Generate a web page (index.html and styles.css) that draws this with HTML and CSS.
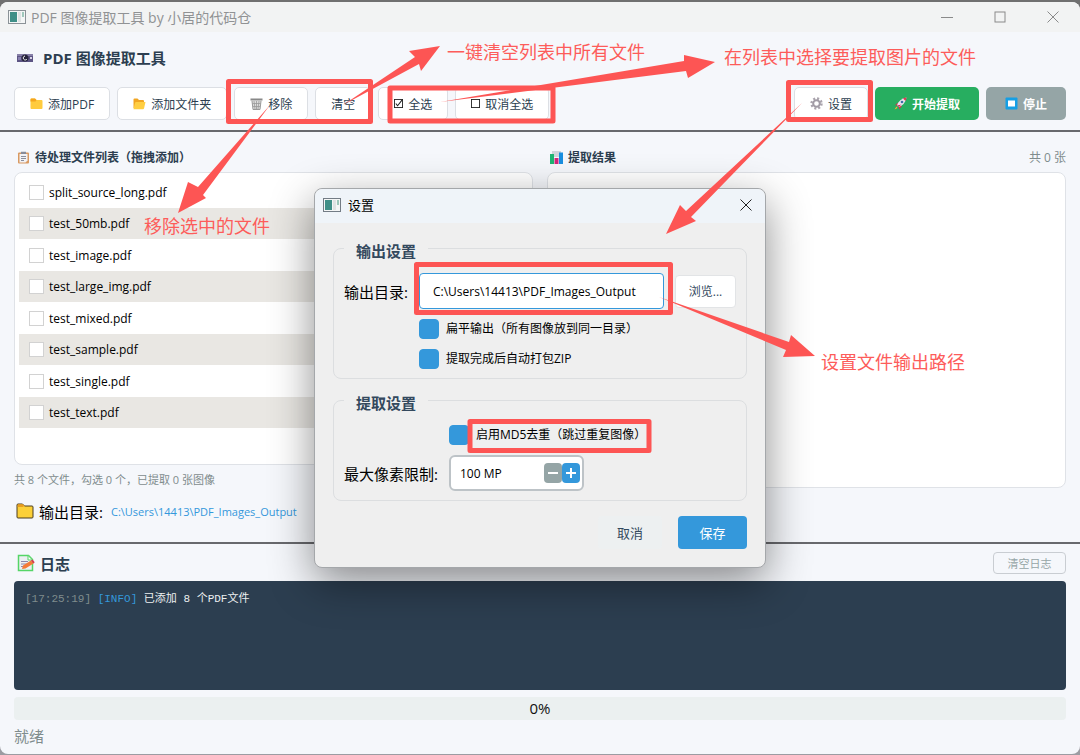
FILE: index.html
```html
<!DOCTYPE html>
<html lang="zh-CN">
<head>
    <meta charset="UTF-8">
    <meta name="viewport" content="width=device-width, initial-scale=1.0">
    <title>PDF 图像提取工具</title>
    <link rel="stylesheet" href="styles.css">
</head>
<body>
    <div class="window">
        <header class="titlebar">
            <svg class="app-icon" viewBox="0 0 18 14"><rect x=".5" y=".5" width="17" height="13" fill="#f4f6f6" stroke="#8b9297"/><rect x="2" y="2" width="7" height="10" fill="#3f8f87"/><rect x="10" y="2" width="3" height="10" fill="#dfe3e3"/><path d="M15 2v5" stroke="#4a9a80"/></svg>
            <span class="titlebar-text">PDF 图像提取工具 by 小居的代码仓</span>
            <div class="window-controls">
                <button type="button" aria-label="最小化"><svg viewBox="0 0 12 12"><path d="M0 6.500h12"/></svg></button>
                <button type="button" aria-label="最大化"><svg viewBox="0 0 12 12"><rect x="1" y="1" width="10" height="10"/></svg></button>
                <button type="button" aria-label="关闭"><svg viewBox="0 0 12 12"><path d="M.5 .5l11 11M11.500 .5l-11 11"/></svg></button>
            </div>
        </header>

        <div class="heading">
            <svg class="heading-icon" viewBox="0 0 16 16"><rect x="0" y="5" width="16" height="8" fill="#5d5584"/><rect x="0" y="5" width="16" height="2" fill="#8780a8"/><rect x="1" y="8" width="3" height="3" fill="#877fae"/><circle cx="8" cy="9" r="3.500" fill="#25233a"/><path d="M8 7a2 2 0 1 0 2 3" fill="none" stroke="#fff"/><rect x="13" y="8" width="2" height="2" fill="#d7d3e6"/></svg>
            <h1>PDF 图像提取工具</h1>
        </div>

        <div class="toolbar">
            <button type="button" class="btn"><svg class="icon" viewBox="0 0 13 13"><path d="M.5 2.500q0-1 1-1h3.500l1.500 1.500h5q1 0 1 1v7q0 1-1 1h-10q-1 0-1-1z" fill="#ffcb3d"/><path d="M.5 2.500q0-1 1-1h3.500l1.500 1.500-1 1.500h-5z" fill="#f4a51e"/></svg>添加PDF</button>
            <button type="button" class="btn"><svg class="icon" viewBox="0 0 13 13"><path d="M.5 2.500q0-1 1-1h3l1.500 1.500h4q1 0 1 1v7h-10.500z" fill="#f1a522"/><path d="M.5 12l1.500-6q.3-1 1-1h9.500l-1.500 6.500q-.2.8-1 .8h-9.500z" fill="#ffce42"/></svg>添加文件夹</button>
            <button type="button" class="btn"><svg class="icon" viewBox="0 0 13 13"><path d="M.5 1.500h12v2h-12z" fill="#888"/><path d="M2 4l1 8.500h7l1-8.500" fill="#ddd" stroke="#999"/><path d="M4 4l1 8M6.500 4v8M9 4l-1 8M2.500 6.500h8M3 9.500h7" stroke="#999" stroke-width=".8"/></svg>移除</button>
            <button type="button" class="btn">清空</button>
            <button type="button" class="btn"><svg class="icon-small" viewBox="0 0 10 10"><rect x=".5" y=".5" width="9" height="9" fill="none" stroke="#222"/><path d="M2 5l2 2.500L9.500 .5" fill="none" stroke="#222" stroke-width="1.200"/></svg>全选</button>
            <button type="button" class="btn"><svg class="icon-small" viewBox="0 0 10 10"><rect x=".5" y=".5" width="9" height="9" fill="none" stroke="#222"/></svg>取消全选</button>
            <span class="spacer"></span>
            <button type="button" class="btn"><svg class="icon" viewBox="0 0 13 13"><circle cx="6.500" cy="6.500" r="5" fill="none" stroke="#aaa4ad" stroke-width="2.400" stroke-dasharray="2 1.927"/><circle cx="6.500" cy="6.500" r="3.300" fill="none" stroke="#a19ba5" stroke-width="2"/></svg>设置</button>
            <button type="button" class="btn btn-start"><svg class="icon" viewBox="0 0 13 13"><path d="M4 5.500L.8 8.500l3-.5M8 9l-3 3.500v-3.500" fill="#d5304f"/><path d="M3 8.500Q5 2 12.500.5 11 8 4.500 10z" fill="#e9e4f0"/><path d="M9 1.500q1.500-.8 3.500-1-.3 2-1 3.500z" fill="#e03a56"/><circle cx="8" cy="5" r="1.300" fill="#3e6fa8"/><path d="M3 8.500l1.500 1.500 3-2.500z" fill="#c43352"/><path d="M2.500 9.500l-2 3 3-1.500z" fill="#ffb52e"/></svg>开始提取</button>
            <button type="button" class="btn btn-stop"><svg class="icon" viewBox="0 0 13 13"><rect x=".5" y=".5" width="12" height="12" rx="1" fill="#159fe5"/><rect x="3" y="3.500" width="7" height="6" fill="#fff"/></svg>停止</button>
        </div>

        <main class="columns">
            <section class="column">
                <div class="column-head">
                    <svg class="icon" viewBox="0 0 13 13"><rect x="1" y="1.500" width="11" height="11" rx="1" fill="#d99a62"/><path d="M2.500 3h8v6.500l-2 2h-6z" fill="#f2f2f5"/><path d="M4 .8h5v2.200h-5z" fill="#888c99"/><path d="M4 5.500h5M4 7.500h5M4 9.500h3" stroke="#8b8f9c"/></svg>
                    <h2>待处理文件列表（拖拽添加）</h2>
                </div>
                <ul class="panel file-list">
                    <li><label><input type="checkbox">split_source_long.pdf</label></li>
                    <li><label><input type="checkbox">test_50mb.pdf</label></li>
                    <li><label><input type="checkbox">test_image.pdf</label></li>
                    <li><label><input type="checkbox">test_large_img.pdf</label></li>
                    <li><label><input type="checkbox">test_mixed.pdf</label></li>
                    <li><label><input type="checkbox">test_sample.pdf</label></li>
                    <li><label><input type="checkbox">test_single.pdf</label></li>
                    <li><label><input type="checkbox">test_text.pdf</label></li>
                </ul>
                <p class="stats">共 8 个文件，勾选 0 个，已提取 0 张图像</p>
            </section>
            <section class="column">
                <div class="column-head">
                    <svg class="icon" viewBox="0 0 13 13"><path d="M2 0h9v6h-9z" fill="#cfd5db"/><rect x="0" y="3" width="4" height="10" fill="#1fb574"/><rect x="4.500" y="7" width="4" height="6" fill="#d4267c"/><rect x="9" y="1.500" width="4" height="11.500" fill="#1a8fe0"/></svg>
                    <h2>提取结果</h2>
                    <span class="count">共 0 张</span>
                </div>
                <div class="panel"></div>
            </section>
        </main>

        <div class="output-row">
            <svg class="icon-large" viewBox="0 0 18 18"><path d="M1 3q0-1 1-1h4.500l2 2h7.500q1 0 1 1v10q0 1-1 1h-14q-1 0-1-1z" fill="#fcd038" stroke="#4a3d20"/><path d="M1.500 5h5.500l1.500-1.500-1.500-1.200h-5z" fill="#e89d20"/></svg>
            <span class="output-label">输出目录:</span>
            <span class="output-path">C:\Users\14413\PDF_Images_Output</span>
        </div>

        <section class="log-area">
            <div class="log-head">
                <svg class="icon-large" viewBox="0 0 18 18"><path d="M1.500 1.500h10l4 4v11h-14z" fill="#eceff2" stroke="#55d567" stroke-width="1.500"/><path d="M11 1.500v4.500h4.500z" fill="#fff" stroke="#55d567"/><path d="M4 7.500h7M4 10h6M4 12.500h3" stroke="#8d86a8"/><path d="M5 15l1-3.500 8-5 2.500 3-8 5z" fill="#f47b38"/><path d="M14 6.500l1.500-1 2.200 2.700-1.200 1.300z" fill="#d8394f"/></svg>
                <h2>日志</h2>
                <button type="button" class="btn-clear-log">清空日志</button>
            </div>
            <div class="log"><span class="log-time">[17:25:19]</span> <span class="log-level">[INFO]</span> 已添加 8 个PDF文件</div>
            <div class="progress">0%</div>
        </section>

        <footer class="statusbar">就绪</footer>
    </div>

    <div class="dialog" role="dialog" aria-labelledby="dialogTitle">
        <div class="dialog-title">
            <svg class="app-icon" viewBox="0 0 18 14"><rect x=".5" y=".5" width="17" height="13" fill="#f4f6f6" stroke="#737c85"/><rect x="2" y="2" width="7" height="10" fill="#3f8f87"/><rect x="10" y="2" width="3" height="10" fill="#dfe3e3"/><path d="M15 2v5" stroke="#4a9a80"/></svg>
            <span id="dialogTitle">设置</span>
            <button type="button" class="dialog-close" aria-label="关闭"><svg viewBox="0 0 12 12"><path d="M.5 .5l11 11M11.500 .5l-11 11"/></svg></button>
        </div>
        <form class="dialog-body">
            <fieldset>
                <legend>输出设置</legend>
                <div class="form-grid">
                    <label for="outputDir">输出目录:</label>
                    <div class="path-row">
                        <input type="text" id="outputDir" value="C:\Users\14413\PDF_Images_Output">
                        <button type="button" class="btn-browse">浏览...</button>
                    </div>
                    <label class="check"><input type="checkbox" checked>扁平输出（所有图像放到同一目录）</label>
                    <label class="check"><input type="checkbox" checked>提取完成后自动打包ZIP</label>
                </div>
            </fieldset>
            <fieldset>
                <legend>提取设置</legend>
                <div class="form-grid">
                    <label class="check"><input type="checkbox" checked>启用MD5去重（跳过重复图像）</label>
                    <label for="maxPixels">最大像素限制:</label>
                    <div class="spin">
                        <input type="text" id="maxPixels" value="100 MP">
                        <button type="button" class="spin-minus" aria-label="减少"><svg viewBox="0 0 10 10"><path d="M0 5h10"/></svg></button>
                        <button type="button" class="spin-plus" aria-label="增加"><svg viewBox="0 0 10 10"><path d="M0 5h10M5 0v10"/></svg></button>
                    </div>
                </div>
            </fieldset>
            <div class="dialog-actions">
                <button type="button" class="btn-cancel">取消</button>
                <button type="button" class="btn-save">保存</button>
            </div>
        </form>
    </div>

    <!-- Guide marks over the window -->
    <svg class="guide" width="1080" height="755" viewBox="0 0 1080 755">
        <g class="guide-box">
            <rect x="228.500" y="81.500" width="142" height="40"/>
            <rect x="390" y="88" width="163" height="33"/>
            <rect x="788.500" y="82.500" width="82" height="37"/>
            <rect x="416.500" y="264.500" width="254" height="48"/>
            <rect x="470" y="421.500" width="179" height="29"/>
        </g>
        <g class="guide-arrow">
            <path d="M270 105L198 187 188 182 178 213 206 198 203 195z"/>
            <path d="M343 105L415 57 409 51 440 46 421 71 419 64z"/>
            <path d="M440 102L684 61 684 55 715 62 688 78 686 71z"/>
            <path d="M802 103L686 211 680 205 666 234 696 221 691 217z"/>
            <path d="M659 297L789 342 791 335 815 356 783 357 786 350z"/>
        </g>
        <g class="guide-text">
            <text x="447" y="59">一键清空列表中所有文件</text>
            <text x="724" y="64">在列表中选择要提取图片的文件</text>
            <text x="144" y="233">移除选中的文件</text>
            <text x="821" y="369">设置文件输出路径</text>
        </g>
    </svg>
</body>
</html>
```
FILE: styles.css
```css
* {
    box-sizing: border-box;
}
body {
    margin: 0;
    min-height: 100vh;
    display: flex;
    flex-direction: column;
    padding: 2px 0 1px;
    position: relative;
    font-family: "Open Sans", "Noto Sans CJK SC", sans-serif;
    font-size: 12px;
    color: #2c3e50;
    background: linear-gradient(#707070 10px, #9c9ca2 11px);
}
h1, h2, p, ul {
    margin: 0;
    padding: 0;
}
button, input {
    font-family: inherit;
    font-size: 12px;
    color: inherit;
    margin: 0;
}
button {
    padding: 0;
    border: none;
    background: none;
    cursor: pointer;
}
svg {
    flex: none;
}
.icon {
    width: 13px;
    height: 13px;
}
.icon-small {
    width: 9px;
    height: 9px;
}
.icon-large {
    width: 18px;
    height: 18px;
}
.app-icon {
    width: 18px;
    height: 14px;
}

/* Main window */
.window {
    flex: 1;
    display: flex;
    flex-direction: column;
    background: #f5f7fb;
    border-radius: 8px;
    overflow: hidden;
}
.titlebar {
    display: flex;
    align-items: center;
    gap: 5px;
    height: 30px;
    padding: 0 21px 0 8px;
    background: #f2f3f3;
    color: #909294;
    font-size: 14px;
}
.window-controls {
    display: flex;
    gap: 41px;
    margin-left: auto;
}
.window-controls svg,
.dialog-close svg {
    display: block;
    width: 12px;
    height: 12px;
    fill: none;
    stroke: #8a8a8a;
}
.heading {
    display: flex;
    align-items: center;
    gap: 10px;
    height: 50px;
    padding: 0 17px;
}
.heading-icon {
    width: 16px;
    height: 16px;
}
h1 {
    font-size: 15px;
}
.toolbar {
    display: flex;
    gap: 7px;
    padding: 5px 14px 10px;
    border-bottom: 2px solid #68696d;
}
.spacer {
    flex: 1;
}
.btn {
    display: flex;
    align-items: center;
    justify-content: center;
    gap: 5px;
    height: 33px;
    padding: 0 15px;
    background: #fff;
    border: 1px solid #dcdfe4;
    border-radius: 5px;
}
.btn-start,
.btn-stop {
    border: none;
    color: #fff;
    font-weight: bold;
    padding: 0 19px;
}
.btn-start {
    background: #27ae60;
}
.btn-stop {
    background: #95a5a6;
}

.columns {
    flex: 1;
    display: grid;
    grid-template-columns: 1fr 1fr;
    gap: 14px;
    padding: 12px 14px 0;
}
.column {
    display: flex;
    flex-direction: column;
}
.column-head {
    display: flex;
    align-items: center;
    gap: 5px;
    height: 28px;
    padding: 0 0 2px 3px;
}
.column-head h2 {
    font-size: 12px;
}
.count {
    margin-left: auto;
    color: #7f8c8d;
}
.panel {
    flex: 1;
    background: #fff;
    border: 1px solid #dfe2e7;
    border-radius: 8px;
}
.file-list {
    list-style: none;
    padding: 3px 4px;
    color: #000;
}
.file-list label {
    display: flex;
    align-items: center;
    gap: 5px;
    height: 32px;
    padding: 0 10px;
}
.file-list li:nth-child(even) label {
    height: 31px;
    background: #e9e7e3;
}
input[type="checkbox"] {
    appearance: none;
    flex: none;
}
.file-list input {
    width: 15px;
    height: 15px;
    background: #fff;
    border: 1px solid #d2d2d2;
}
.stats {
    padding-top: 6px;
    height: 23px;
    font-size: 11px;
    line-height: 18px;
    color: #7f8c8d;
}
.output-row {
    display: flex;
    align-items: center;
    height: 56px;
    padding: 0 16px 8px;
    border-bottom: 2px solid #68696d;
}
.output-label {
    margin: 0 8px 0 5px;
    font-size: 15px;
    color: #000;
}
.output-path {
    font-size: 11px;
    color: #3498db;
}

/* Log */
.log-area {
    padding: 8px 14px 0;
}
.log-head {
    display: flex;
    align-items: center;
    gap: 5px;
    height: 22px;
    padding-left: 3px;
    margin-bottom: 7px;
}
.log-head h2 {
    font-size: 15px;
}
.btn-clear-log {
    width: 73px;
    height: 22px;
    margin-left: auto;
    border: 1px solid #c9cdd2;
    border-radius: 4px;
    font-size: 11px;
    color: #95a5a6;
}
.log {
    height: 109px;
    padding: 9px 11px;
    background: #2c3e50;
    border-radius: 4px;
    font-family: "Liberation Mono", "Noto Sans CJK SC", monospace;
    font-size: 11px;
    line-height: 18px;
    color: #ecf0f1;
}
.log-time {
    color: #7f8c8d;
}
.log-level {
    color: #3498db;
}
.progress {
    height: 23px;
    margin-top: 7px;
    background: #ebf0f0;
    border-radius: 4px;
    text-align: center;
    font-size: 15px;
    line-height: 22px;
    color: #111;
}
.statusbar {
    height: 34px;
    padding: 0 14px;
    font-size: 15px;
    line-height: 32px;
    color: #7f8c8d;
}

/* Settings dialog */
.dialog {
    position: absolute;
    top: 188px;
    left: 50%;
    transform: translateX(-50%);
    width: 452px;
    background: #efefef;
    border: 1px solid #a4a7aa;
    border-radius: 8px;
    box-shadow: 0 14px 44px rgba(0, 0, 0, 0.45);
    color: #000;
}
.dialog-title {
    display: flex;
    align-items: center;
    gap: 7px;
    height: 34px;
    padding: 0 13px 3px 8px;
    background: #eff4f9;
    border-radius: 8px 8px 0 0;
    font-size: 13px;
}
.dialog-close {
    margin-left: auto;
}
.dialog-close svg {
    stroke: #222;
}
.dialog-body {
    padding: 12px 18px 18px;
}
fieldset {
    min-width: 0;
    margin: 0 0 8px;
    padding: 12px 10px 9px;
    border: 1px solid #dcdee0;
    border-radius: 8px;
}
legend {
    padding: 6px 12px 0;
    font-size: 15px;
    font-weight: bold;
    line-height: 20px;
    color: #34495e;
}
.form-grid {
    display: grid;
    grid-template-columns: auto 1fr;
    align-items: center;
    gap: 10px 11px;
    font-size: 15px;
}
.check {
    grid-column: 2;
    display: flex;
    align-items: center;
    gap: 7px;
    font-size: 12px;
    line-height: 20px;
}
.check input {
    width: 20px;
    height: 20px;
    border: 1px solid #3498db;
    border-radius: 4px;
    background: #3498db;
}
.path-row {
    display: flex;
    align-items: center;
    gap: 11px;
}
.path-row input {
    flex: 1;
    min-width: 0;
    height: 36px;
    padding: 0 13px;
    border: 1px solid #3498db;
    border-radius: 4px;
}
.btn-browse {
    width: 61px;
    height: 33px;
    background: #fff;
    border: 1px solid #e2e4e6;
    border-radius: 4px;
    color: #34495e;
}
.spin {
    display: flex;
    align-items: center;
    width: 135px;
    height: 36px;
    padding-right: 2px;
    background: #fff;
    border: 2px solid #bdc3c7;
    border-radius: 6px;
}
.spin input {
    flex: 1;
    min-width: 0;
    padding: 0 9px;
    border: none;
    background: none;
}
.spin button {
    width: 18px;
    height: 20px;
    padding: 4px;
    border-radius: 4px;
}
.spin svg {
    display: block;
    width: 10px;
    height: 10px;
    stroke: #fff;
    stroke-width: 2;
}
.spin-minus {
    background: #95a5a6;
}
.spin-plus {
    background: #3498db;
}
.dialog-actions {
    display: flex;
    justify-content: flex-end;
    gap: 16px;
    padding-top: 7px;
}
.dialog-actions button {
    height: 33px;
    border-radius: 4px;
    font-size: 13px;
}
.btn-cancel {
    width: 64px;
    background: #edf0f1;
    color: #34495e;
}
.dialog-actions .btn-save {
    width: 69px;
    background: #3498db;
    color: #fff;
}

/* Guide marks */
.guide {
    position: absolute;
    top: 0;
    left: 0;
    pointer-events: none;
}
.guide-box {
    fill: none;
    stroke: #fd5554;
    stroke-width: 5;
    stroke-linejoin: round;
}
.guide-arrow {
    fill: #fd5554;
}
.guide-text {
    fill: #fd5c5a;
    font-size: 18px;
}
```
